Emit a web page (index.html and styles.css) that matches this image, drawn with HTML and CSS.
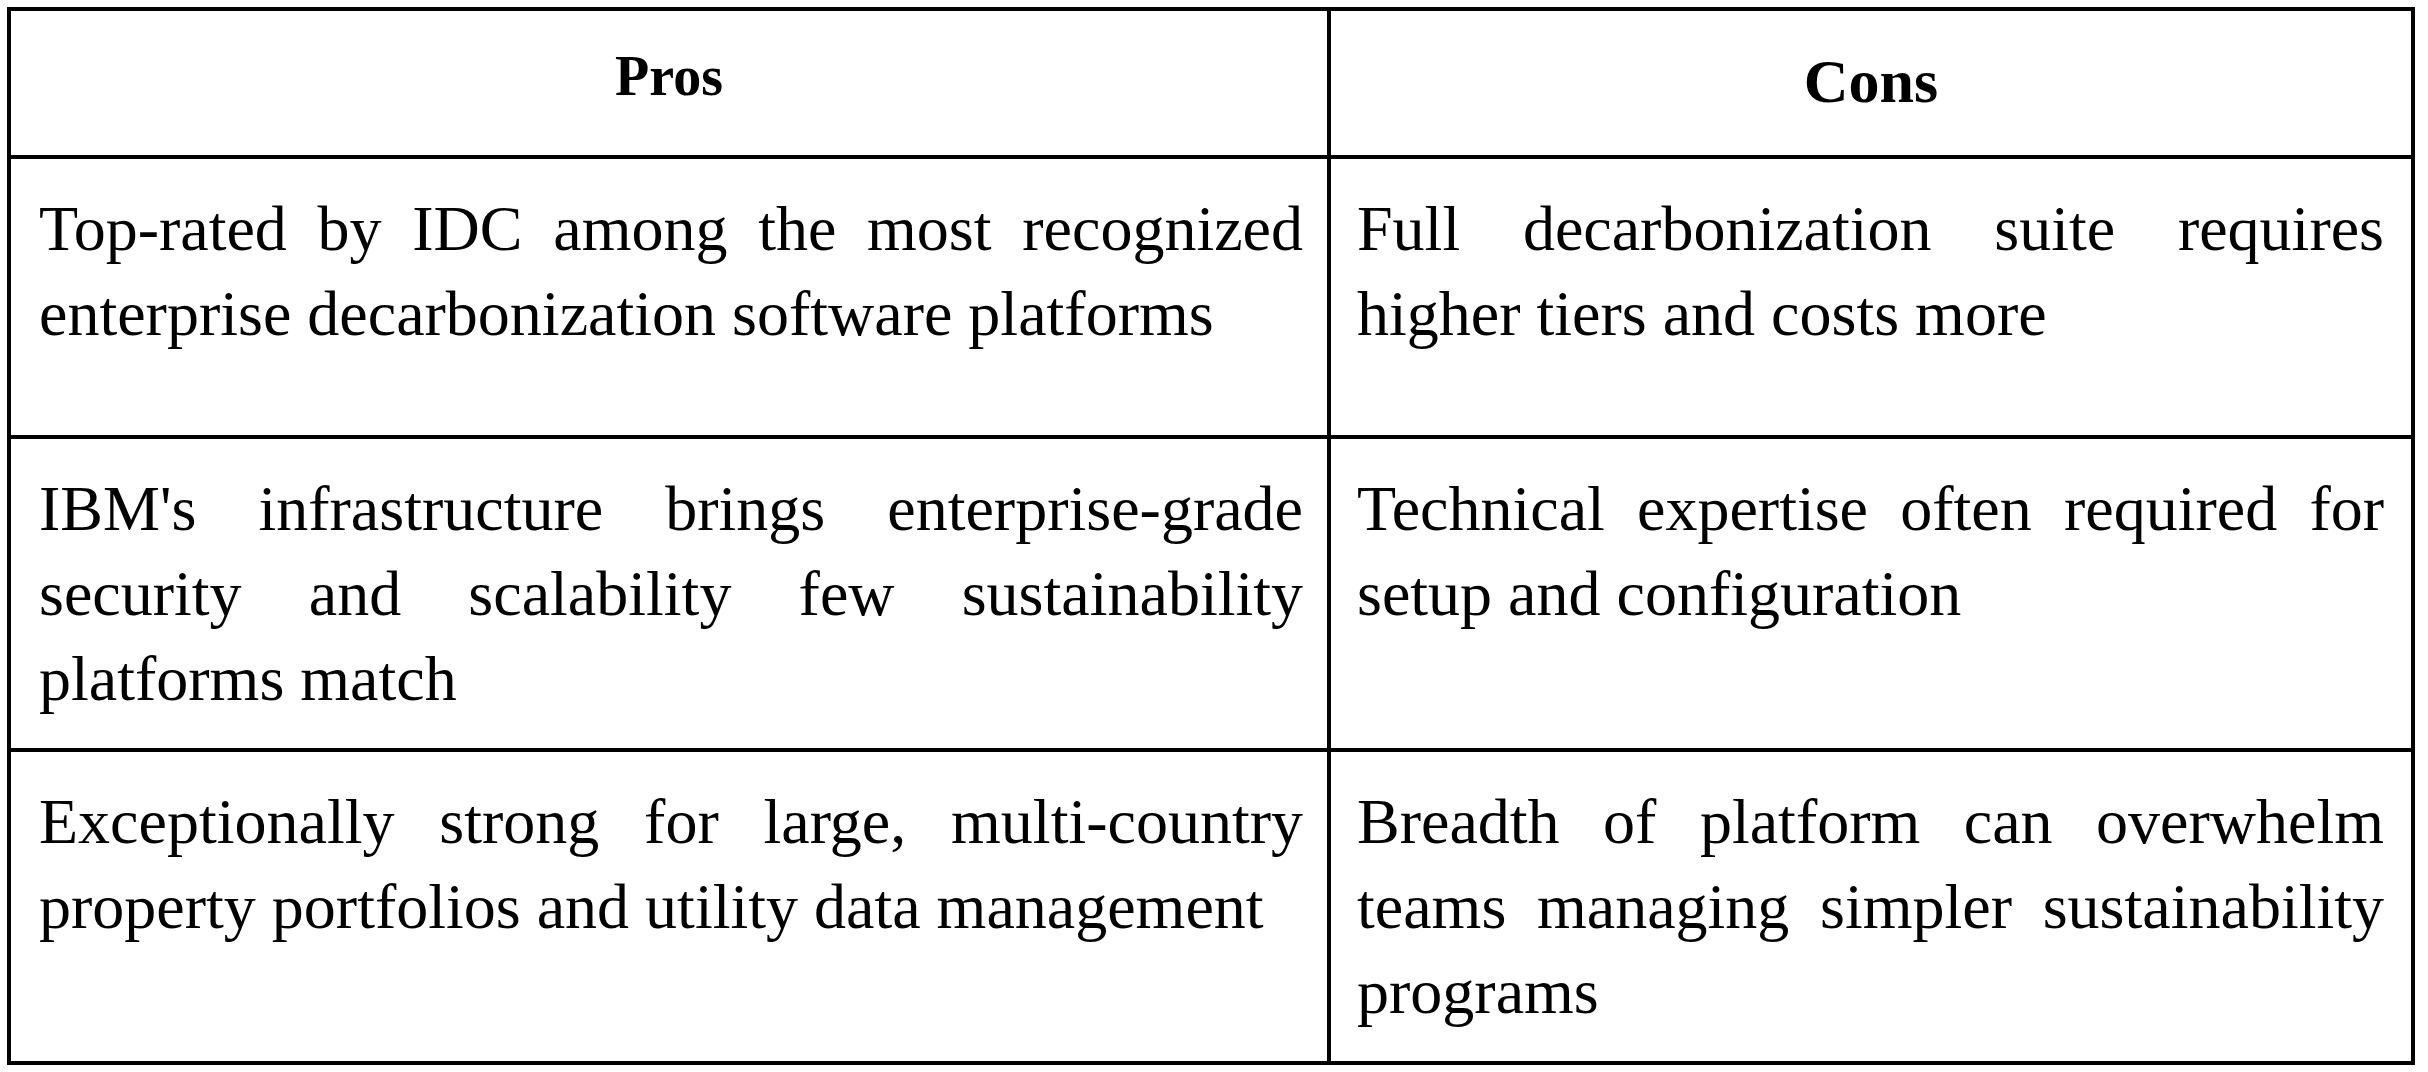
FILE: index.html
```html
<!DOCTYPE html>
<html lang="en">
<head>
<meta charset="utf-8">
<title>Pros and Cons</title>
<link rel="stylesheet" href="styles.css">
</head>
<body>
<table class="pc-table">
  <colgroup>
    <col class="col-pros">
    <col class="col-cons">
  </colgroup>
  <thead>
    <tr>
      <th class="head head-pros">Pros</th>
      <th class="head head-cons">Cons</th>
    </tr>
  </thead>
  <tbody>
    <tr class="row-first">
      <td class="cell cell-pros">Top-rated by IDC among the most recognized enterprise decarbonization software platforms</td>
      <td class="cell cell-cons">Full decarbonization suite requires higher tiers and costs more</td>
    </tr>
    <tr>
      <td class="cell cell-pros">IBM's infrastructure brings enterprise-grade security and scalability few sustainability platforms match</td>
      <td class="cell cell-cons">Technical expertise often required for setup and configuration</td>
    </tr>
    <tr>
      <td class="cell cell-pros">Exceptionally strong for large, multi-country property portfolios and utility data management</td>
      <td class="cell cell-cons">Breadth of platform can overwhelm teams managing simpler sustainability programs</td>
    </tr>
  </tbody>
</table>
</body>
</html>
```

FILE: styles.css
```css
html, body {
  margin: 0;
  padding: 0;
  background: #ffffff;
}

body {
  padding: 7px;
  font-family: "Liberation Serif", "Times New Roman", serif;
  color: #000000;
}

.pc-table {
  width: 2408px;
  table-layout: fixed;
  border-collapse: separate;
  border-spacing: 0;
  border: 2px solid #000000;
}

.col-pros {
  width: 1320px;
}

.head,
.cell {
  border: 2px solid #000000;
}

.head {
  height: 131px;
  padding: 0 0 13px 0;
  font-weight: bold;
  text-align: center;
  vertical-align: middle;
  line-height: 1.15;
}

.head-pros {
  font-size: 56px;
}

.head-cons {
  font-size: 62px;
  padding-top: 5px;
  padding-bottom: 8px;
}

.cell {
  vertical-align: top;
  font-size: 64px;
  line-height: 85px;
  text-align: justify;
  padding: 27px 24px 27px 28px;
}

.cell-cons {
  padding-left: 26px;
  padding-right: 27px;
}

.row-first .cell {
  padding-bottom: 79px;
}
```
